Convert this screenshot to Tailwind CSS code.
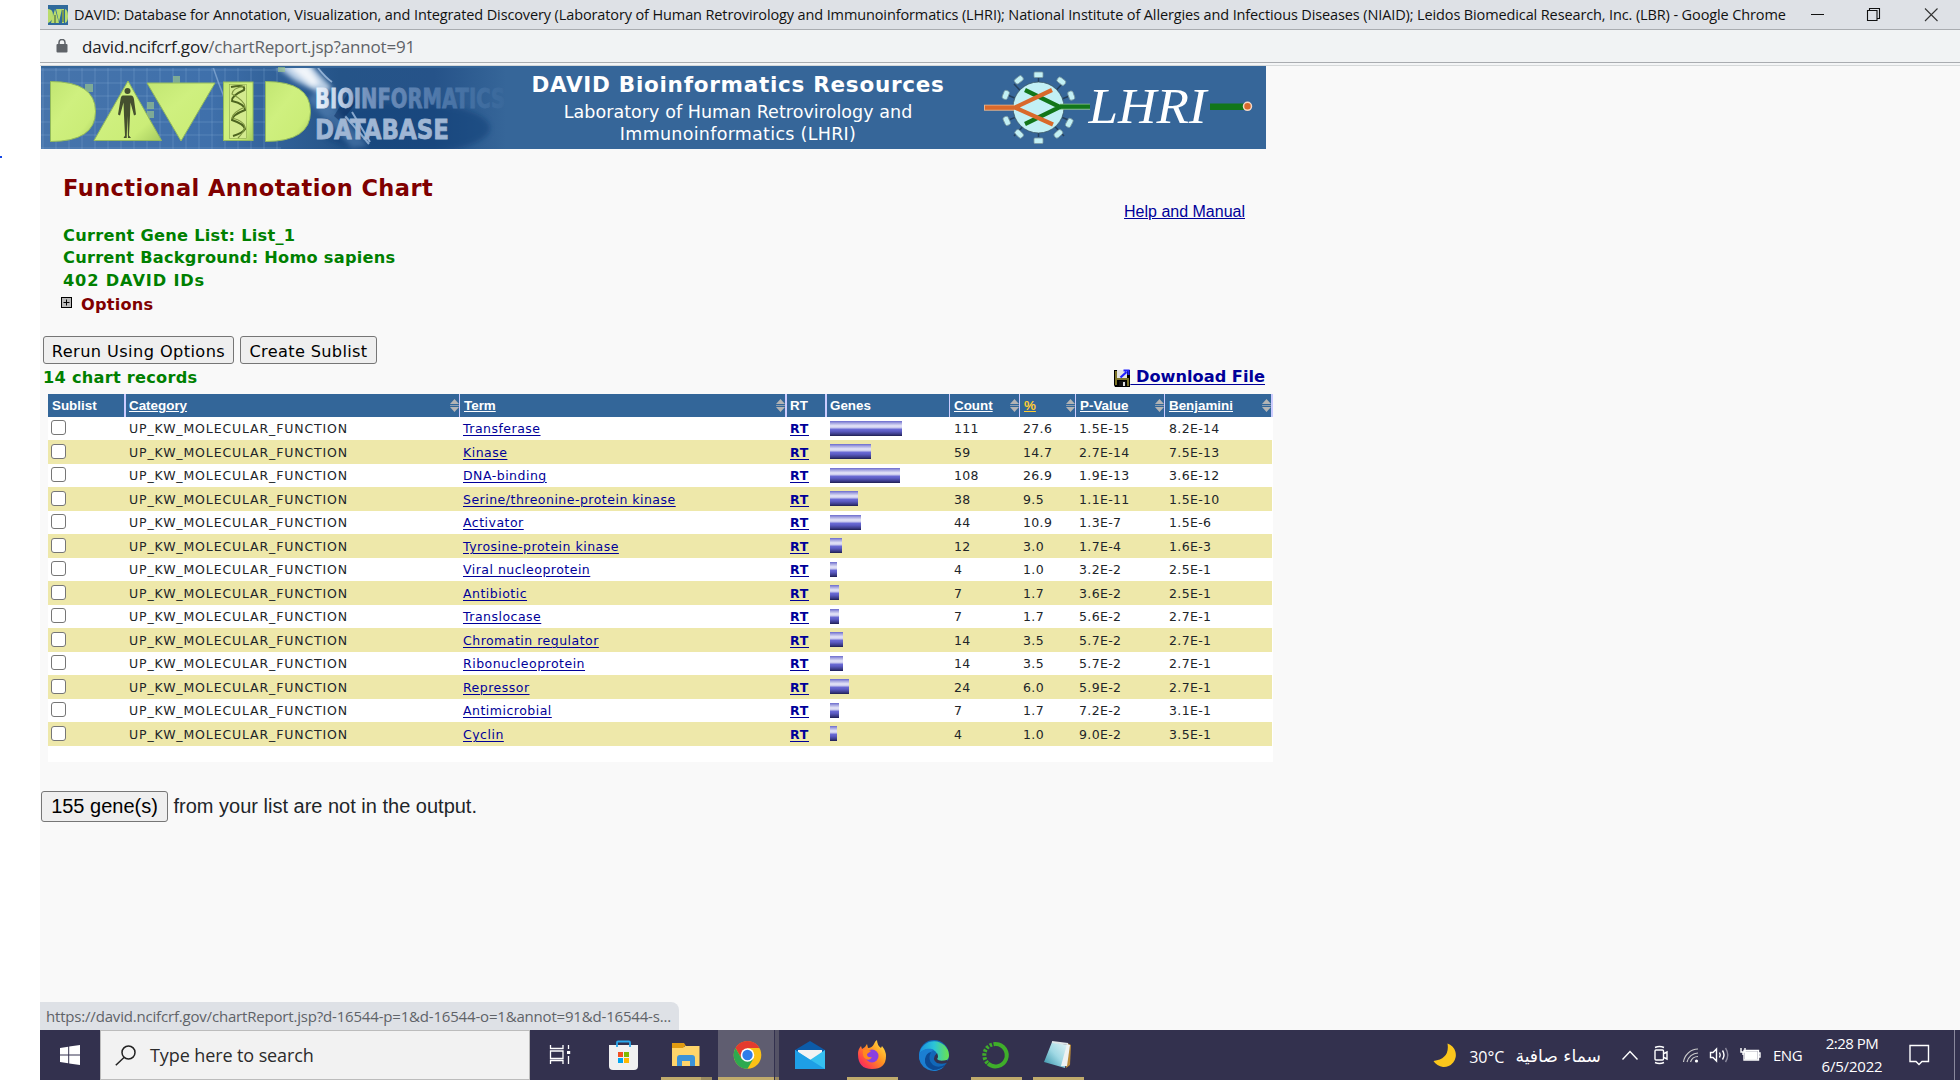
<!DOCTYPE html>
<html lang="en">
<head>
<meta charset="utf-8">
<title>DAVID Functional Annotation Chart</title>
<script src="https://cdn.jsdelivr.net/npm/@tailwindcss/browser@4"></script>
</head>
<body class="w-[1960px] h-[1080px] overflow-hidden bg-white pl-10 flex flex-col relative">
<div class="absolute left-0 top-[156px] w-[2px] h-[2px] bg-blue-700"></div>

<!-- window title bar -->
<header class="h-[30px] shrink-0 bg-[#dee1e6] border-b border-[#a9acb0] flex items-center pl-2 font-['Open_Sans',sans-serif]">
  <svg class="w-5 h-5 shrink-0" viewBox="0 0 20 20"><rect width="20" height="20" fill="#2f6a9c"/><path d="M0 4q5 0 5 6t-5 8zM3 18L7 4l4 14zM8 4h6l-3 13zM14 4h2v14h-2zM17 4q3 1 3 7t-3 7z" fill="#b9dc6c"/><path d="M7 10v8M15 5v12" stroke="#3d5a34"/></svg>
  <span class="ml-[6px] w-[1712px] whitespace-nowrap text-[14.5px] leading-[28px] tracking-[-0.12px] text-[#111]">DAVID: Database for Annotation, Visualization, and Integrated Discovery (Laboratory of Human Retrovirology and Immunoinformatics (LHRI); National Institute of Allergies and Infectious Diseases (NIAID); Leidos Biomedical Research, Inc. (LBR) - Google Chrome</span>
  <svg class="w-[140px] h-[28px] ml-[22px] shrink-0" viewBox="0 0 140 28" fill="none" stroke="#111" stroke-width="1.100"><path d="M3 13.500h13M59.500 9.500h9.500v10h-9.500zM61.500 9.500v-2h10v10h-2"/><path d="M117 7.500l12.500 12.500M129.500 7.500L117 20" stroke="#333"/></svg>
</header>
<div class="h-8 shrink-0 bg-[#f1f3f4] flex items-center pl-4 font-['Open_Sans',sans-serif]">
  <svg class="w-[12px] h-[14px]" viewBox="0 0 12 14"><path d="M1.500 5H10.500Q11.500 5 11.500 6V12.500Q11.500 13.500 10.500 13.500H1.500Q.5 13.500 .5 12.500V6Q.5 5 1.500 5z" fill="#5f6368"/><path d="M3 6V3.500a3 3 0 0 1 6 0V6" fill="none" stroke="#5f6368" stroke-width="1.500"/></svg>
  <span class="ml-[14px] text-[17px] leading-8 tracking-[-0.18px] pt-px text-[#5f6368] whitespace-nowrap"><span class="text-[#202124]">david.ncifcrf.gov</span>/chartReport.jsp?annot=91</span>
</div>
<div class="h-1 shrink-0 border-t border-[#a9acb0] bg-[#f4f5f6] flex flex-col justify-center"><div class="h-px bg-[#d5d8d9] mt-px"></div></div>

<main class="grow bg-[#f9f9f9] flex flex-col font-['DejaVu_Sans',sans-serif]">
  <!-- site banner -->
  <div class="ml-px w-[1225px] h-[83px] bg-[#366699] flex">
    <svg class="w-[480px] h-[83px] shrink-0" viewBox="41 66 480 83">
      <defs>
        <linearGradient id="bg" x1="0" x2="1"><stop offset="0" stop-color="#4674ab"/><stop offset=".35" stop-color="#3f70ab"/><stop offset=".62" stop-color="#255488"/><stop offset=".82" stop-color="#265389"/><stop offset=".97" stop-color="#366699"/></linearGradient>
        <linearGradient id="gr" x1="0" y1="0" x2="1" y2="1"><stop offset="0" stop-color="#c2e672"/><stop offset=".4" stop-color="#cff07f"/><stop offset=".75" stop-color="#cbed78"/><stop offset="1" stop-color="#a6cb5e"/></linearGradient>
        <linearGradient id="fade" x1="316" x2="515" y1="0" y2="0" gradientUnits="userSpaceOnUse"><stop offset="0" stop-color="#eef4fc"/><stop offset=".12" stop-color="#c0d0e6"/><stop offset=".25" stop-color="#7593bd"/><stop offset=".6" stop-color="#4f78aa"/><stop offset="1" stop-color="#366699"/></linearGradient>
        <filter id="soft" x="-20%" y="-20%" width="140%" height="140%"><feGaussianBlur stdDeviation="2.500"/></filter>
        <pattern id="grid" width="13" height="13" patternUnits="userSpaceOnUse"><path d="M4 0V13M0 5H13" stroke="#8db0d8" stroke-opacity=".3" fill="none"/></pattern>
      </defs>
      <rect x="41" y="66" width="480" height="83" fill="url(#bg)"/>
      <rect x="41" y="66" width="240" height="83" fill="url(#grid)"/>
      <ellipse cx="405" cy="128" rx="85" ry="26" fill="#103c74" opacity=".5" filter="url(#soft)"/>
      <path d="M274 64h36l22 24-10 6-28-14z" fill="#dcebfb" opacity=".8" filter="url(#soft)"/>
      <path d="M288 66h20l12 18-8 2z" fill="#fff" opacity=".8" filter="url(#soft)"/>
      <path d="M318 88l50 58-16 2-44-48z" fill="#7fa9d8" opacity=".35" filter="url(#soft)"/>
      <path d="M212 64q12 36 24 60" stroke="#9bbbe0" stroke-opacity=".6" stroke-width="1.500" fill="none"/>
      <path d="M318 68q8 10 14 14M345 116l14 16 10 12M352 112l18 30" stroke="#b8d2f0" stroke-opacity=".7" stroke-width="2" fill="none"/>
      <path d="M350 90l-16 26 7 6 16-20z" fill="#0c2f62" opacity=".55"/>
      <path d="M41 66.500h480" stroke="#366699" stroke-width="3"/>
      <g fill="#9ec98b" opacity=".65"><rect x="85" y="84" width="8" height="8"/><rect x="173" y="76" width="7" height="7"/><rect x="147" y="102" width="7" height="7"/><rect x="147" y="111" width="7" height="7"/><rect x="278" y="67" width="7" height="5"/></g>
      <g fill="url(#gr)" stroke="#93ba5c" stroke-width="1">
        <path d="M50.500 81.500q45 0 45 30t-45 30z"/><path d="M128 81l33.500 59.500H94z"/><path d="M147 83h68L181 141z"/><rect x="223.500" y="82" width="29.500" height="58.500"/><path d="M265.500 81.500q45 0 45 30t-45 30z"/>
      </g>
      <g fill="#45502f"><circle cx="127.500" cy="91" r="3"/><path d="M124 95.500h7q2.500 0 3 4l2 15-2 1-3.500-13-.5 13-1 20 2 2.500h-3l-.6-22-.7 22h-3.200l1.500-2.500-1-20-.5-13-3.500 13-2-1 2.500-15q.5-4 2.500-4z"/></g>
      <rect x="229.500" y="84.500" width="17" height="54" fill="#d3ea8e" stroke="#8aa84c" stroke-width=".6"/>
      <g fill="none" stroke="#4d6420" stroke-width="2"><path d="M231 87q15-3 13 3-13 6-12 11 13 3 13 9-13 5-13 10 12 4 13 9-2 4-12 7"/><path d="M245 86q-13 2-13 8 13 7 13 13-12 5-13 11 12 3 13 9-1 5-7 11" stroke="#7d9440" stroke-width="1.200"/></g>
      <g font-family="DejaVu Sans" font-weight="bold" stroke-width=".8"><text x="315" y="107.500" font-size="26" textLength="190" lengthAdjust="spacingAndGlyphs" fill="url(#fade)" stroke="url(#fade)">BIOINFORMATICS</text><text x="315" y="139" font-size="27" textLength="134" lengthAdjust="spacingAndGlyphs" fill="#9fb6d4" stroke="#9fb6d4">DATABASE</text></g>
    </svg>
    <div class="w-[434px] text-white flex flex-col items-center whitespace-nowrap">
      <div class="mt-[5px] text-[21.5px] leading-[28px] font-bold tracking-[0.73px]">DAVID Bioinformatics Resources</div>
      <div class="mt-[2px] text-[17.5px] leading-[22px] tracking-[0.05px]">Laboratory of Human Retrovirology and</div>
      <div class="text-[17.5px] leading-[22px] tracking-[0.28px]">Immunoinformatics (LHRI)</div>
    </div>
    <svg class="w-[300px] h-[83px] ml-[4px] shrink-0" viewBox="959 66 300 83">
      <g stroke="#24405e" stroke-width="1.500"><path d="M1038.500 77v60M1014 84l50 52M1062 84l-48 52M1005 94l66 27M1006 121l66-26"/></g>
      <g fill="#c2f0f5" stroke="#7d9aa0" stroke-width=".8">
        <rect x="1034" y="72" width="9" height="5.500" rx="1"/><rect x="1034" y="138" width="9" height="5.500" rx="1"/>
        <rect x="1014.500" y="77" width="9" height="5.500" rx="2" transform="rotate(-38 1019 80)"/><rect x="1057" y="78.500" width="9" height="5.500" rx="2" transform="rotate(38 1061.500 81)"/>
        <rect x="1001.500" y="92" width="9" height="5.500" rx="2" transform="rotate(-68 1006 95)"/><rect x="1067" y="93" width="9" height="5.500" rx="2" transform="rotate(70 1071.500 95.500)"/>
        <rect x="1002" y="118" width="9" height="5.500" rx="2" transform="rotate(65 1006.500 121)"/><rect x="1065" y="120" width="9" height="5.500" rx="2" transform="rotate(-62 1069.500 123)"/>
        <rect x="1014.500" y="131" width="9" height="5.500" rx="2" transform="rotate(45 1019 134)"/><rect x="1054" y="131" width="9" height="5.500" rx="2" transform="rotate(-42 1058.500 134)"/>
      </g>
      <circle cx="1038.500" cy="107.500" r="25.500" fill="#c2f0f5" stroke="#3b5866" stroke-width=".8"/>
      <g fill="none" stroke-width="4.200"><path d="M984 107.700h30" stroke="#e8b48c" stroke-width="6"/><path d="M1060 106.700h30" stroke="#8cc090" stroke-width="6"/><path d="M1025 90l35 17-35 17M1058 106.700h32" stroke="#12761a"/><path d="M1052 90l-37 17.500 38 17M985 107.700h32" stroke="#d9692b"/></g>
      <text x="1088.500" y="123" font-family="Liberation Serif" font-style="italic" font-size="50" textLength="118" lengthAdjust="spacingAndGlyphs" fill="#fff">LHRI</text>
      <path d="M1210 106.700h36" stroke="#12761a" stroke-width="6.500"/><circle cx="1247.500" cy="106.300" r="4" fill="#d9692b" stroke="#f6d9c6" stroke-width="1.500"/>
    </svg>
  </div>

  <!-- page heading -->
  <section class="flex justify-between w-[1205px] h-[187px] pl-[23px] font-bold text-[16.2px] text-[#008000] whitespace-nowrap">
    <div class="flex flex-col items-start pt-6">
      <h1 class="text-[22.5px] leading-[30px] tracking-[0.43px] text-[#800000]">Functional Annotation Chart</h1>
      <div class="mt-[22px] leading-[22px] tracking-[0.27px]">Current Gene List: List_1</div>
      <div class="leading-[22px] tracking-[0.25px]">Current Background: Homo sapiens</div>
      <div class="leading-6 tracking-[0.85px]">402 DAVID IDs</div>
      <div class="leading-6 text-[#800000] flex -ml-[2px]"><svg class="w-[11px] h-[11px] mt-[4px] mr-[9px]" viewBox="0 0 11 11"><rect x=".5" y=".5" width="10" height="10" fill="#bbb" stroke="#000"/><path d="M2.500 5.500h6M5.500 2.500v6" stroke="#000"/></svg><span class="tracking-[0.2px]">Options</span></div>
    </div>
    <a class="mt-[52px] text-[16px] leading-[22px] font-normal font-['Liberation_Sans',sans-serif] text-[#000099] underline self-start">Help and Manual</a>
  </section>

  <div class="flex gap-[6px] ml-[3px] h-7 text-[16.2px] text-black">
    <button class="w-[191px] bg-[#efefef] border border-[#767676] rounded-[3px] whitespace-nowrap leading-[26px] pt-[2px] tracking-[0.4px]">Rerun Using Options</button>
    <button class="w-[137px] bg-[#efefef] border border-[#767676] rounded-[3px] whitespace-nowrap leading-[26px] pt-[2px] tracking-[0.32px]">Create Sublist</button>
  </div>
  <div class="flex justify-between h-[30px] pt-[2px] w-[1225px] pl-[3px] text-[16.2px] leading-[22px] font-bold">
    <span class="text-[#008000] self-start tracking-[0.25px] pt-px">14 chart records</span>
    <a class="flex self-start text-[#000099]">
      <svg class="w-4 h-[18px] mt-[3px]" viewBox="0 0 16 18"><path d="M0 1h16v17H1L0 16z" fill="#000"/><path d="M1 2h2v14H1zM13 9h2v8h-2zM3 9h10v2H3z" fill="#7d7428"/><path d="M3 1h10v8H3z" fill="#e4e4e4"/><path d="M5 12h7v5H5z" fill="#111"/><path d="M9 13h2v4H9z" fill="#ddd"/><path d="M6.500 8.500l6-5.500M9.500 1.500H14.500V6" fill="none" stroke="#2222ff" stroke-width="2.200"/></svg>
      <span class="underline underline-offset-2 whitespace-pre"> Download File</span>
    </a>
  </div>

  <!-- chart table -->
  <div class="ml-2 w-[1225px] h-[368px] bg-white">
    <div id="head" class="grid grid-cols-[78px_334px_327px_40px_123px_70px_56px_89px_108px] h-[23px] bg-[#336699] text-white font-bold font-['Liberation_Sans',sans-serif] text-[13.4px] leading-[23px]"></div>
    <div id="rows"></div>
  </div>

  <div class="ml-px mt-[29px] flex items-center h-[31px] font-['Liberation_Sans',sans-serif] text-[20px] text-[#212529] whitespace-nowrap">
    <button class="w-[127px] h-[31px] bg-[#efefef] border border-[#767676] rounded-[3px] text-black leading-[29px]">155 gene(s)</button>
    <span class="ml-[5.500px] leading-[31px]">from your list are not in the output.</span>
  </div>

  <div class="mt-auto w-[639px] h-7 bg-[#dee1e6] rounded-tr-lg pl-[6px] text-[15px] leading-7 tracking-[-0.185px] text-[#5f6368] font-['Open_Sans',sans-serif] whitespace-nowrap">https://david.ncifcrf.gov/chartReport.jsp?d-16544-p=1&amp;d-16544-o=1&amp;annot=91&amp;d-16544-s...</div>
</main>

<!-- taskbar -->
<footer class="h-[50px] shrink-0 bg-[#33314e] flex font-['Open_Sans',sans-serif] text-white whitespace-nowrap">
  <div class="w-[60px] flex items-center justify-center"><svg class="w-5 h-5" viewBox="0 0 20 20" fill="#fff"><path d="M0 3l8.200-1.200v7.700H0zM9.200 1.600L20 0v9.500H9.200zM0 10.500h8.200v7.700L0 17zM9.200 10.500H20V20L9.200 18.400z"/></svg></div>
  <div class="w-[430px] bg-[#f2f2f2] border border-[#bcbcbc] flex items-center pl-[14px] text-[#2b2b2b]">
    <svg class="w-[21px] h-[21px]" viewBox="0 0 21 21" fill="none" stroke="#222" stroke-width="1.500"><circle cx="13.500" cy="7.500" r="6.500"/><path d="M9 12.500L.8 20.300"/></svg>
    <span class="ml-[14px] text-[18px] leading-[48px] tracking-[-0.1px]">Type here to search</span>
  </div>
  <svg class="w-[570px] h-[50px] shrink-0" viewBox="530 1030 570 50">
    <defs>
      <linearGradient id="ed" x1="0" x2="1"><stop offset="0" stop-color="#1b8fe0"/><stop offset=".5" stop-color="#2cc4d8"/><stop offset="1" stop-color="#6be34a"/></linearGradient>
      <linearGradient id="ff" x1="1" y1="0" x2="0" y2="1"><stop offset="0" stop-color="#fff04a"/><stop offset=".45" stop-color="#ff9320"/><stop offset=".8" stop-color="#ff3b4e"/><stop offset="1" stop-color="#e0218a"/></linearGradient>
      <linearGradient id="np" x1="0" y1="1" x2="1" y2="0"><stop offset="0" stop-color="#2c8ca4"/><stop offset=".5" stop-color="#9fd8e4"/><stop offset="1" stop-color="#e4f4f6"/></linearGradient>
    </defs>
    <g fill="none" stroke="#fff" stroke-width="1.300"><path d="M550.500 1045v3.500h12.500v-3.500M550.500 1064v-3.500h12.500v3.500M550.500 1051h12.500v7.500h-12.500zM568.500 1045v4M568.500 1056v8"/></g><rect x="567" y="1051" width="3.200" height="3" fill="#fff"/>
    <path d="M609 1045h29v21q0 4-4 4h-21q-4 0-4-4z" fill="#f1f1f1"/><path d="M617 1047v-4.500q0-1 1-1h11q1 0 1 1v4.500" fill="none" stroke="#2aa9ee" stroke-width="1.800"/><path fill="#f25022" d="M618 1052h5v5h-5z"/><path fill="#7fba00" d="M624 1052h5v5h-5z"/><path fill="#00a4ef" d="M618 1058h5v5h-5z"/><path fill="#ffb900" d="M624 1058h5v5h-5z"/>
    <path d="M672 1043h12l2 3h-2v6h-12z" fill="#e09a10"/><path d="M672 1048h11l2-2h14.500v20H672z" fill="#ffd56a"/><path d="M677 1066v-8q0-3 3-3h12q3 0 3 3v8h-5v-5h-8v5z" fill="#3c93d8"/>
    <rect x="718" y="1030" width="56" height="50" fill="#5f5d70"/><rect x="774" y="1030" width="1" height="50" fill="#33314e"/><rect x="775" y="1030" width="4" height="50" fill="#545265"/>
    <g transform="translate(747.500 1055)"><circle r="13.800" fill="#fbc116"/><path d="M-12-6.900A13.800 13.800 0 0 1 12-6.900H0L-6 3.500z" fill="#e33b2e"/><path d="M-12-6.900A13.800 13.800 0 0 0 0 13.800L6 3.500H-6z" fill="#2da94f"/><circle r="6.800" fill="#fff"/><circle r="5.200" fill="#2f7de9"/></g>
    <path d="M795 1050l15-9 15 9v4h-30z" fill="#0c5ba8"/><path d="M798 1050h24v9l-12 7-12-7z" fill="#f3f3f3"/><path d="M795 1050l15 10 15-10v19h-30z" fill="#36c0f0"/><path d="M795 1050v19h30z" fill="#1e9fe6"/>
    <path d="M858 1054q0-5 3-8l1 3 3-2 2-3 1 4q4 0 6-4 1-3 3-4 0 5 4 8l1-2q4 5 4 10 0 13-14 13t-14-15z" fill="url(#ff)"/><circle cx="872" cy="1056" r="6.500" fill="#8a3fe0"/><path d="M863 1050q5-1 8 1l-4 3q0 4 5 3-2 4-6 2t-3-9z" fill="#ff8a1e"/>
    <g transform="translate(934 1055)"><circle r="15" fill="#1268b8"/><path d="M-14.800-1A15 15 0 0 1 15 0C15 7 7 8 3 6 1 5 4 4 3-1 1-7-10-8-14.800-1z" fill="url(#ed)"/><path d="M-15-1C-11-7-3-7 0-5-6-3-7 5-3 10 0 14 7 14 11 11A15 15 0 0 1-15-1z" fill="#1b7fd2"/><path d="M-3-3Q-7 5-1 10 5 14 12 9 7 15-1 15-10 12-9 4-8-2-3-3z" fill="#0c4a94"/><path d="M3-2q2 4 0 6 2 3 10 1l2 2q-6 3-12 1-6-4 0-10z" fill="#33314e"/></g>
    <path d="M996 1044a11.200 11.200 0 1 1-8 19.500" fill="none" stroke="#3fae2a" stroke-width="4"/><path d="M996 1044a11.200 11.200 0 0 0-8 19.500" fill="none" stroke="#3fae2a" stroke-width="4" stroke-dasharray="2.500 1.500"/>
    <path d="M1067 1043l4 2-1 20-4 3z" fill="#b98a3a"/><path d="M1052 1042l16 3-3 23-21-6z" fill="url(#np)"/><path d="M1061 1066l6-22 3 1-3 21z" fill="#eef2f2"/><path d="M1052 1042l16 2" stroke="#dfe6e8" stroke-width="2"/>
    <g fill="#c0ab6c"><path d="M661 1077h40v3h-40zM718 1077h56v3h-56zM847 1077h51v3h-51zM971 1077h51v3h-51zM1033 1077h51v3h-51z"/></g><path d="M701 1077h11v3h-11zM775 1077h4v3h-4z" fill="#9a8a60"/>
  </svg>
  <div class="ml-auto flex items-center h-[50px] pr-[5px]">
    <svg class="w-6 h-6" viewBox="0 0 24 24"><path d="M14.500 0.500A12 12 0 1 1 .5 18Q17 16 14.500.5z" fill="#fbc61c"/></svg>
    <span class="ml-[12px] pt-[3px] text-[16px] leading-[50px]">30°C</span>
    <span dir="rtl" class="ml-[11px] pt-[2px] text-[17.2px] leading-[50px] font-['DejaVu_Sans',sans-serif]">سماء صافية</span>
    <svg class="ml-[21px] w-[332px] h-[50px] shrink-0" viewBox="1622 1030 332 50" fill="none" stroke="#fff" stroke-width="1.400">
      <path d="M1622.500 1059.500l7.500-8 7.500 8"/>
      <rect x="1655" y="1050" width="8.500" height="10" rx="1"/><path d="M1664 1053.500l3-1.500v7l-3-1.500M1655 1047.500q4.500-2 9 0M1655 1062.500q4.500 2 9 0"/>
      <path d="M1683.500 1062a15 15 0 0 1 14.500-13M1687 1062a11.500 11.500 0 0 1 11-9M1690.500 1062a8 8 0 0 1 7.500-5.500" stroke-width="1.200" stroke="#ccc"/><circle cx="1696.500" cy="1061" r="1.600" fill="#fff" stroke="none"/>
      <path d="M1710.500 1052.500h2.500l3.500-3.500v12l-3.500-3.500h-2.500zM1719.500 1052.500q1.500 2.500 0 5M1722.500 1050.500q3 4.500 0 9"/><path d="M1725.500 1048q4.500 7 0 14" stroke="#8a889c"/>
      <path d="M1744 1050.500h14.500v9.500h-14.500z"/><path d="M1745.500 1052h11.500v7h-11.500z" fill="#fff"/><path d="M1759 1053h1v4h-1M1741 1048v4h4v-4M1743 1052v3"/>
      <path d="M1910 1045.500h18.500v16h-6.500l-3 3-3-3h-6z"/>
    </svg>
    <div class="w-px h-[50px] bg-[#8a889c]"></div>
  </div>
</footer>
<!-- language and clock, over the tray icons -->
<div class="absolute top-[1030px] left-[1773px] w-[127px] h-[50px] flex text-white font-['Open_Sans',sans-serif] text-[15px]">
  <span class="w-[31px] leading-[50px] tracking-[-0.5px]">ENG</span>
  <div class="grow flex flex-col items-center leading-[23px] pt-[2px] whitespace-nowrap"><span class="tracking-[-0.5px]">2:28 PM</span><span class="tracking-[-0.2px]">6/5/2022</span></div>
</div>

<script>
const sort = '<svg class="w-[9px] h-[13px] mt-[5px]" viewBox="0 0 9 13"><path d="M4.500 0L9 5H0zM0 8h9l-4.500 5z" fill="#b4b4b4"/><path d="M0 6.500h9" stroke="#8a9db0"/></svg>';
const heads = [['Sublist',0,2,4],['Category',1,1,3],['Term',1,2,4],['RT',0,2,3],['Genes',0,1,3],['Count',1,1,4],['%',1,1,4],['P-Value',1,1,4],['Benjamini',1,2,4]];
document.getElementById('head').innerHTML = heads.map(([t,s,b,p]) =>
  `<div class="flex justify-between border-[#ccccff] ${b===2?'border-r-2':'border-r'} ${p===4?'pl-1':'pl-[3px]'}"><span class="${s?'underline':''} ${t==='%'?'text-[#ffcc33]':''}">${t}</span>${s?sort:''}</div>`).join('');
const data = [
['Transferase',72,'111','27.6','1.5E-15','8.2E-14'],['Kinase',41,'59','14.7','2.7E-14','7.5E-13'],['DNA-binding',70,'108','26.9','1.9E-13','3.6E-12'],
['Serine/threonine-protein kinase',28,'38','9.5','1.1E-11','1.5E-10'],['Activator',31,'44','10.9','1.3E-7','1.5E-6'],['Tyrosine-protein kinase',12,'12','3.0','1.7E-4','1.6E-3'],
['Viral nucleoprotein',7,'4','1.0','3.2E-2','2.5E-1'],['Antibiotic',9,'7','1.7','3.6E-2','2.5E-1'],['Translocase',9,'7','1.7','5.6E-2','2.7E-1'],
['Chromatin regulator',13,'14','3.5','5.7E-2','2.7E-1'],['Ribonucleoprotein',13,'14','3.5','5.7E-2','2.7E-1'],['Repressor',19,'24','6.0','5.9E-2','2.7E-1'],
['Antimicrobial',9,'7','1.7','7.2E-2','3.1E-1'],['Cyclin',7,'4','1.0','9.0E-2','3.5E-1']];
document.getElementById('rows').innerHTML = data.map((r,i) =>
  `<div class="grid grid-cols-[78px_334px_327px_40px_123px_70px_56px_89px_107px] w-[1224px] text-[12.5px] tracking-[0.35px] text-[#212529] whitespace-nowrap ${i%2?'h-6 leading-[25px] bg-[#eee8aa]':'h-[23px] leading-[23px] bg-white'}">
  <div class="pl-[3px] ${i%2?'pt-1':'pt-[3px]'}"><div class="w-[15px] h-[15px] bg-white border border-[#767676] rounded-[3px]"></div></div>
  <div class="pl-[3px] tracking-[0.86px]">UP_KW_MOLECULAR_FUNCTION</div>
  <div class="pl-[3px] text-[#000099] tracking-[0.49px]"><span class="underline underline-offset-2">${r[0]}</span></div>
  <div class="pl-[3px] text-[#000099] font-bold tracking-[0.7px]"><span class="underline underline-offset-2">RT</span></div>
  <div class="pl-[3px] pt-1"><div class="h-[15px] bg-[linear-gradient(#6a6acd_0%,#a9a9e2_15%,#e6e6f8_33%,#c9c9ee_45%,#6a6ad4_55%,#5c5cc4_68%,#3a3a86_88%,#1e1e50_100%)]" style="width:${r[1]}px"></div></div>
  <div class="pl-1">${r[2]}</div><div class="pl-[3px]">${r[3]}</div><div class="pl-[3px]">${r[4]}</div><div class="pl-1">${r[5]}</div></div>`).join('');
</script>
</body>
</html>
